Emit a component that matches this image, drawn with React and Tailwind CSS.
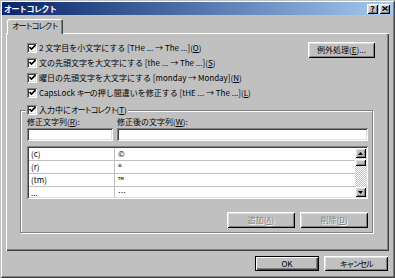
import React from "react";

const raised =
  "bg-[#c0c0c0] shadow-[inset_1px_1px_0_#fff,inset_-1px_-1px_0_#000,inset_2px_2px_0_#dfdfdf,inset_-2px_-2px_0_#808080]";
const sunken =
  "bg-white shadow-[inset_1px_1px_0_#808080,inset_-1px_-1px_0_#fff,inset_2px_2px_0_#404040,inset_-2px_-2px_0_#dfdfdf]";

function Check() {
  return (
    <span className={`${sunken} w-[10px] h-[10px] shrink-0 flex items-center justify-center`}>
      <svg width="7" height="7" viewBox="0 0 7 7">
        <path d="M0.5 3 L2.5 5 L6.5 1" fill="none" stroke="#000" strokeWidth="1.6" />
      </svg>
    </span>
  );
}

function U({ children }) {
  return <span className="underline underline-offset-1">{children}</span>;
}

// katakana in the reference font is narrower
function K({ children }) {
  return <span className="tracking-[-1.5px]">{children}</span>;
}

function CheckRow({ children }) {
  return (
    <div className="h-[15px] flex items-center gap-[2px] whitespace-nowrap">
      <Check />
      <span>{children}</span>
    </div>
  );
}

function Arrow({ up }) {
  return (
    <div className={`${raised} w-[11px] h-[10px] flex items-center justify-center`}>
      <svg width="5" height="3" viewBox="0 0 5 3">
        <path d={up ? "M0 3 L2.5 0 L5 3 Z" : "M0 0 L2.5 3 L5 0 Z"} fill="#000" />
      </svg>
    </div>
  );
}

const rows = [
  ["(c)", "©"],
  ["(r)", "®"],
  ["(tm)", "™"],
  ["...", "…"],
];

export default function App() {
  return (
    <div className="w-[395px] h-[278px] p-[2px] bg-[#c0c0c0] font-['Noto_Sans_CJK_JP',sans-serif] text-[8px] leading-[10px] text-black shadow-[inset_1px_1px_0_#c0c0c0,inset_-1px_-1px_0_#404040,inset_2px_2px_0_#fff,inset_-2px_-2px_0_#808080] overflow-hidden">
      {/* title bar */}
      <div className="h-[13px] flex items-center pl-[2px] pr-[3px] bg-gradient-to-r from-[#0a246a] to-[#a6caf0]">
        <span className="text-white font-bold flex-1 tracking-[-0.5px]">オートコレクト</span>
        <div className={`${raised} w-[11px] h-[10px] flex items-center justify-center text-[8px] font-bold leading-none`}>?</div>
        <div className={`${raised} ml-[1px] w-[11px] h-[10px] flex items-center justify-center`}>
          <svg width="6" height="5" viewBox="0 0 6 5">
            <path d="M0.5 0.5 L5.5 4.5 M5.5 0.5 L0.5 4.5" stroke="#000" strokeWidth="1.3" />
          </svg>
        </div>
      </div>

      <div className="flex flex-col px-[4px] pt-[4px]">
        {/* tab */}
        <div className="relative z-10 -mb-px ml-[1px] w-[56px] h-[15px] bg-[#c0c0c0] pl-[5px] pt-[2px] rounded-t-[2px] shadow-[inset_1px_1px_0_#fff,inset_-1px_0_0_#404040,inset_-2px_0_0_#808080] whitespace-nowrap">
          <K>オートコレクト</K>
        </div>

        {/* panel */}
        <div className="h-[218px] pt-[7px] pl-[14px] pr-[16px] shadow-[inset_1px_1px_0_#fff,inset_-1px_-1px_0_#404040,inset_-2px_-2px_0_#808080]">
          <div className="flex justify-between pl-[7px] -mr-[2px]">
            <div className="flex flex-col">
              <CheckRow>
                2 文字目を小文字にする [THe ... → The ...](<U>O</U>)
              </CheckRow>
              <CheckRow>
                文の先頭文字を大文字にする [the ... → The ...](<U>S</U>)
              </CheckRow>
              <CheckRow>
                曜日の先頭文字を大文字にする [monday → Monday](<U>N</U>)
              </CheckRow>
              <CheckRow>
                CapsLock <K>キー</K>の押し間違いを修正する [tHE ... → The ...](<U>L</U>)
              </CheckRow>
            </div>
            <button className={`${raised} mt-[2px] w-[67px] h-[16px] flex items-center justify-center`}>
              例外処理(<U>E</U>)...
            </button>
          </div>

          {/* group box */}
          <div className="relative mt-[10px] h-[123px] border border-[#808080] shadow-[inset_1px_1px_0_#fff,1px_1px_0_#fff] pt-[6px] pl-[6px] pr-[4px]">
            <div className="absolute -top-[7px] left-[5px] h-[11px] px-[1px] bg-[#c0c0c0] flex items-center gap-[2px] whitespace-nowrap">
              <Check />
              <span>
                入力中に<K>オートコレクト</K>(<U>T</U>)
              </span>
            </div>

            <div className="h-[11px] flex whitespace-nowrap">
              <span className="w-[90px]">
                修正文字列(<U>R</U>):
              </span>
              <span>
                修正後の文字列(<U>W</U>):
              </span>
            </div>
            <div className="flex gap-[4px]">
              <div className={`${sunken} w-[86px] h-[13px]`} />
              <div className={`${sunken} flex-1 h-[13px]`} />
            </div>

            {/* list */}
            <div className={`${sunken} mt-[5px] h-[53px] p-[2px] flex`}>
              <div className="flex-1 overflow-hidden">
                {rows.map(([a, b]) => (
                  <div key={a} className="h-[13px] flex border-b border-[#c0c0c0]">
                    <div className="w-[86px] pl-[2px] border-r border-[#c0c0c0] flex items-center">{a}</div>
                    <div className="pl-[3px] flex items-center">{b}</div>
                  </div>
                ))}
              </div>
              <div className="w-[11px] flex flex-col bg-[repeating-conic-gradient(#fff_0_25%,#c0c0c0_0_50%)] bg-[length:2px_2px]">
                <Arrow up />
                <div className={`${raised} h-[7px] mt-[1px]`} />
                <div className="flex-1" />
                <Arrow />
              </div>
            </div>

            <div className="mt-[13px] flex justify-end gap-[5px]">
              <button className={`${raised} w-[68px] h-[16px] flex items-center justify-center text-[#808080] [text-shadow:1px_1px_0_#fff]`}>
                追加(<U>A</U>)
              </button>
              <button className={`${raised} w-[68px] h-[16px] flex items-center justify-center text-[#808080] [text-shadow:1px_1px_0_#fff]`}>
                削除(<U>D</U>)
              </button>
            </div>
          </div>
        </div>

        {/* bottom buttons */}
        <div className="mt-[5px] pr-[1px] flex justify-end gap-[5px]">
          <button className="w-[64px] h-[15px] flex items-center justify-center bg-[#c0c0c0] shadow-[inset_0_0_0_1px_#000,inset_2px_2px_0_#fff,inset_-2px_-2px_0_#404040,inset_-3px_-3px_0_#808080]">
            OK
          </button>
          <button className={`${raised} w-[64px] h-[15px] flex items-center justify-center`}>
            <K>キャンセル</K>
          </button>
        </div>
      </div>
    </div>
  );
}
